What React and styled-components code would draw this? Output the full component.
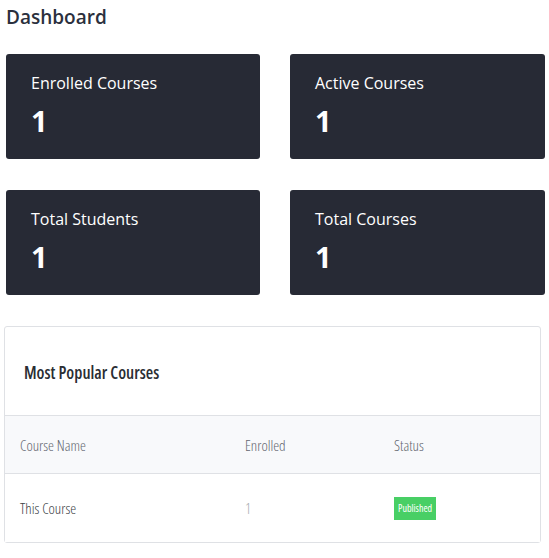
import styled, {createGlobalStyle} from "styled-components"

const Global = createGlobalStyle`
    body {
        margin: 0;
        background: #ffffff;
        font-family: "Open Sans", "Noto Sans", sans-serif;
    }
`

const Page = styled.div`
    padding: 4px 4px 0 6px;
`

const Title = styled.h1`
    margin: 0 0 24px;
    font-size: 19px;
    font-weight: 600;
    color: #2b303d;
    line-height: 26px;
`

const Grid = styled.div`
    display: grid;
    grid-template-columns: 254px 255px;
    column-gap: 30px;
    row-gap: 31px;
`

const StatCard = styled.div`
    background: #272a35;
    border-radius: 3px;
    height: 105px;
    padding: 18px 25px;
    box-sizing: border-box;
    color: #ffffff;
`

const StatLabel = styled.div`
    font-size: 16px;
    line-height: 22px;
`

const StatValue = styled.div`
    font-size: 29px;
    font-weight: 700;
    line-height: 40px;
    margin-top: 7px;
`

const Panel = styled.div`
    margin: 31px 0 0 -2px;
    width: 537px;
    border: 1px solid #dfe1e5;
    border-radius: 3px;
    box-sizing: border-box;
    font-stretch: 78%;
`

const PanelTitle = styled.div`
    height: 88px;
    padding: 0 19px;
    display: flex;
    align-items: center;
    font-size: 17px;
    font-weight: 600;
    color: #2a2d33;
    padding-top: 2px;
    box-sizing: border-box;
`

const Row = styled.div`
    display: grid;
    grid-template-columns: 225px 149px 1fr;
    align-items: center;
    padding-left: 15px;
    height: ${({head}) => head ? "57px" : "68px"};
    background: ${({head}) => head ? "#f8f9fb" : "#ffffff"};
    border-top: 1px solid #dfe1e5;
    font-size: 15px;
    font-weight: 300;
    color: ${({head}) => head ? "#62666f" : "#3c3f46"};
`

const Cell = styled.div`
    color: ${({muted}) => muted ? "#a9abb0" : "inherit"};
`

const Badge = styled.span`
    display: inline-block;
    background: #48cf65;
    color: #ffffff;
    font-size: 10px;
    font-weight: 400;
    line-height: 23px;
    padding: 0 4px;
`

const stats = [
    {label: "Enrolled Courses", value: 1},
    {label: "Active Courses", value: 1},
    {label: "Total Students", value: 1},
    {label: "Total Courses", value: 1},
]

export default function App() {
    return (
        <>
            <Global />
            <Page>
                <Title>Dashboard</Title>
                <Grid>
                    {stats.map(s => (
                        <StatCard key={s.label}>
                            <StatLabel>{s.label}</StatLabel>
                            <StatValue>{s.value}</StatValue>
                        </StatCard>
                    ))}
                </Grid>
                <Panel>
                    <PanelTitle>Most Popular Courses</PanelTitle>
                    <Row head>
                        <Cell>Course Name</Cell>
                        <Cell>Enrolled</Cell>
                        <Cell>Status</Cell>
                    </Row>
                    <Row>
                        <Cell>This Course</Cell>
                        <Cell muted>1</Cell>
                        <Cell><Badge>Published</Badge></Cell>
                    </Row>
                </Panel>
            </Page>
        </>
    )
}
